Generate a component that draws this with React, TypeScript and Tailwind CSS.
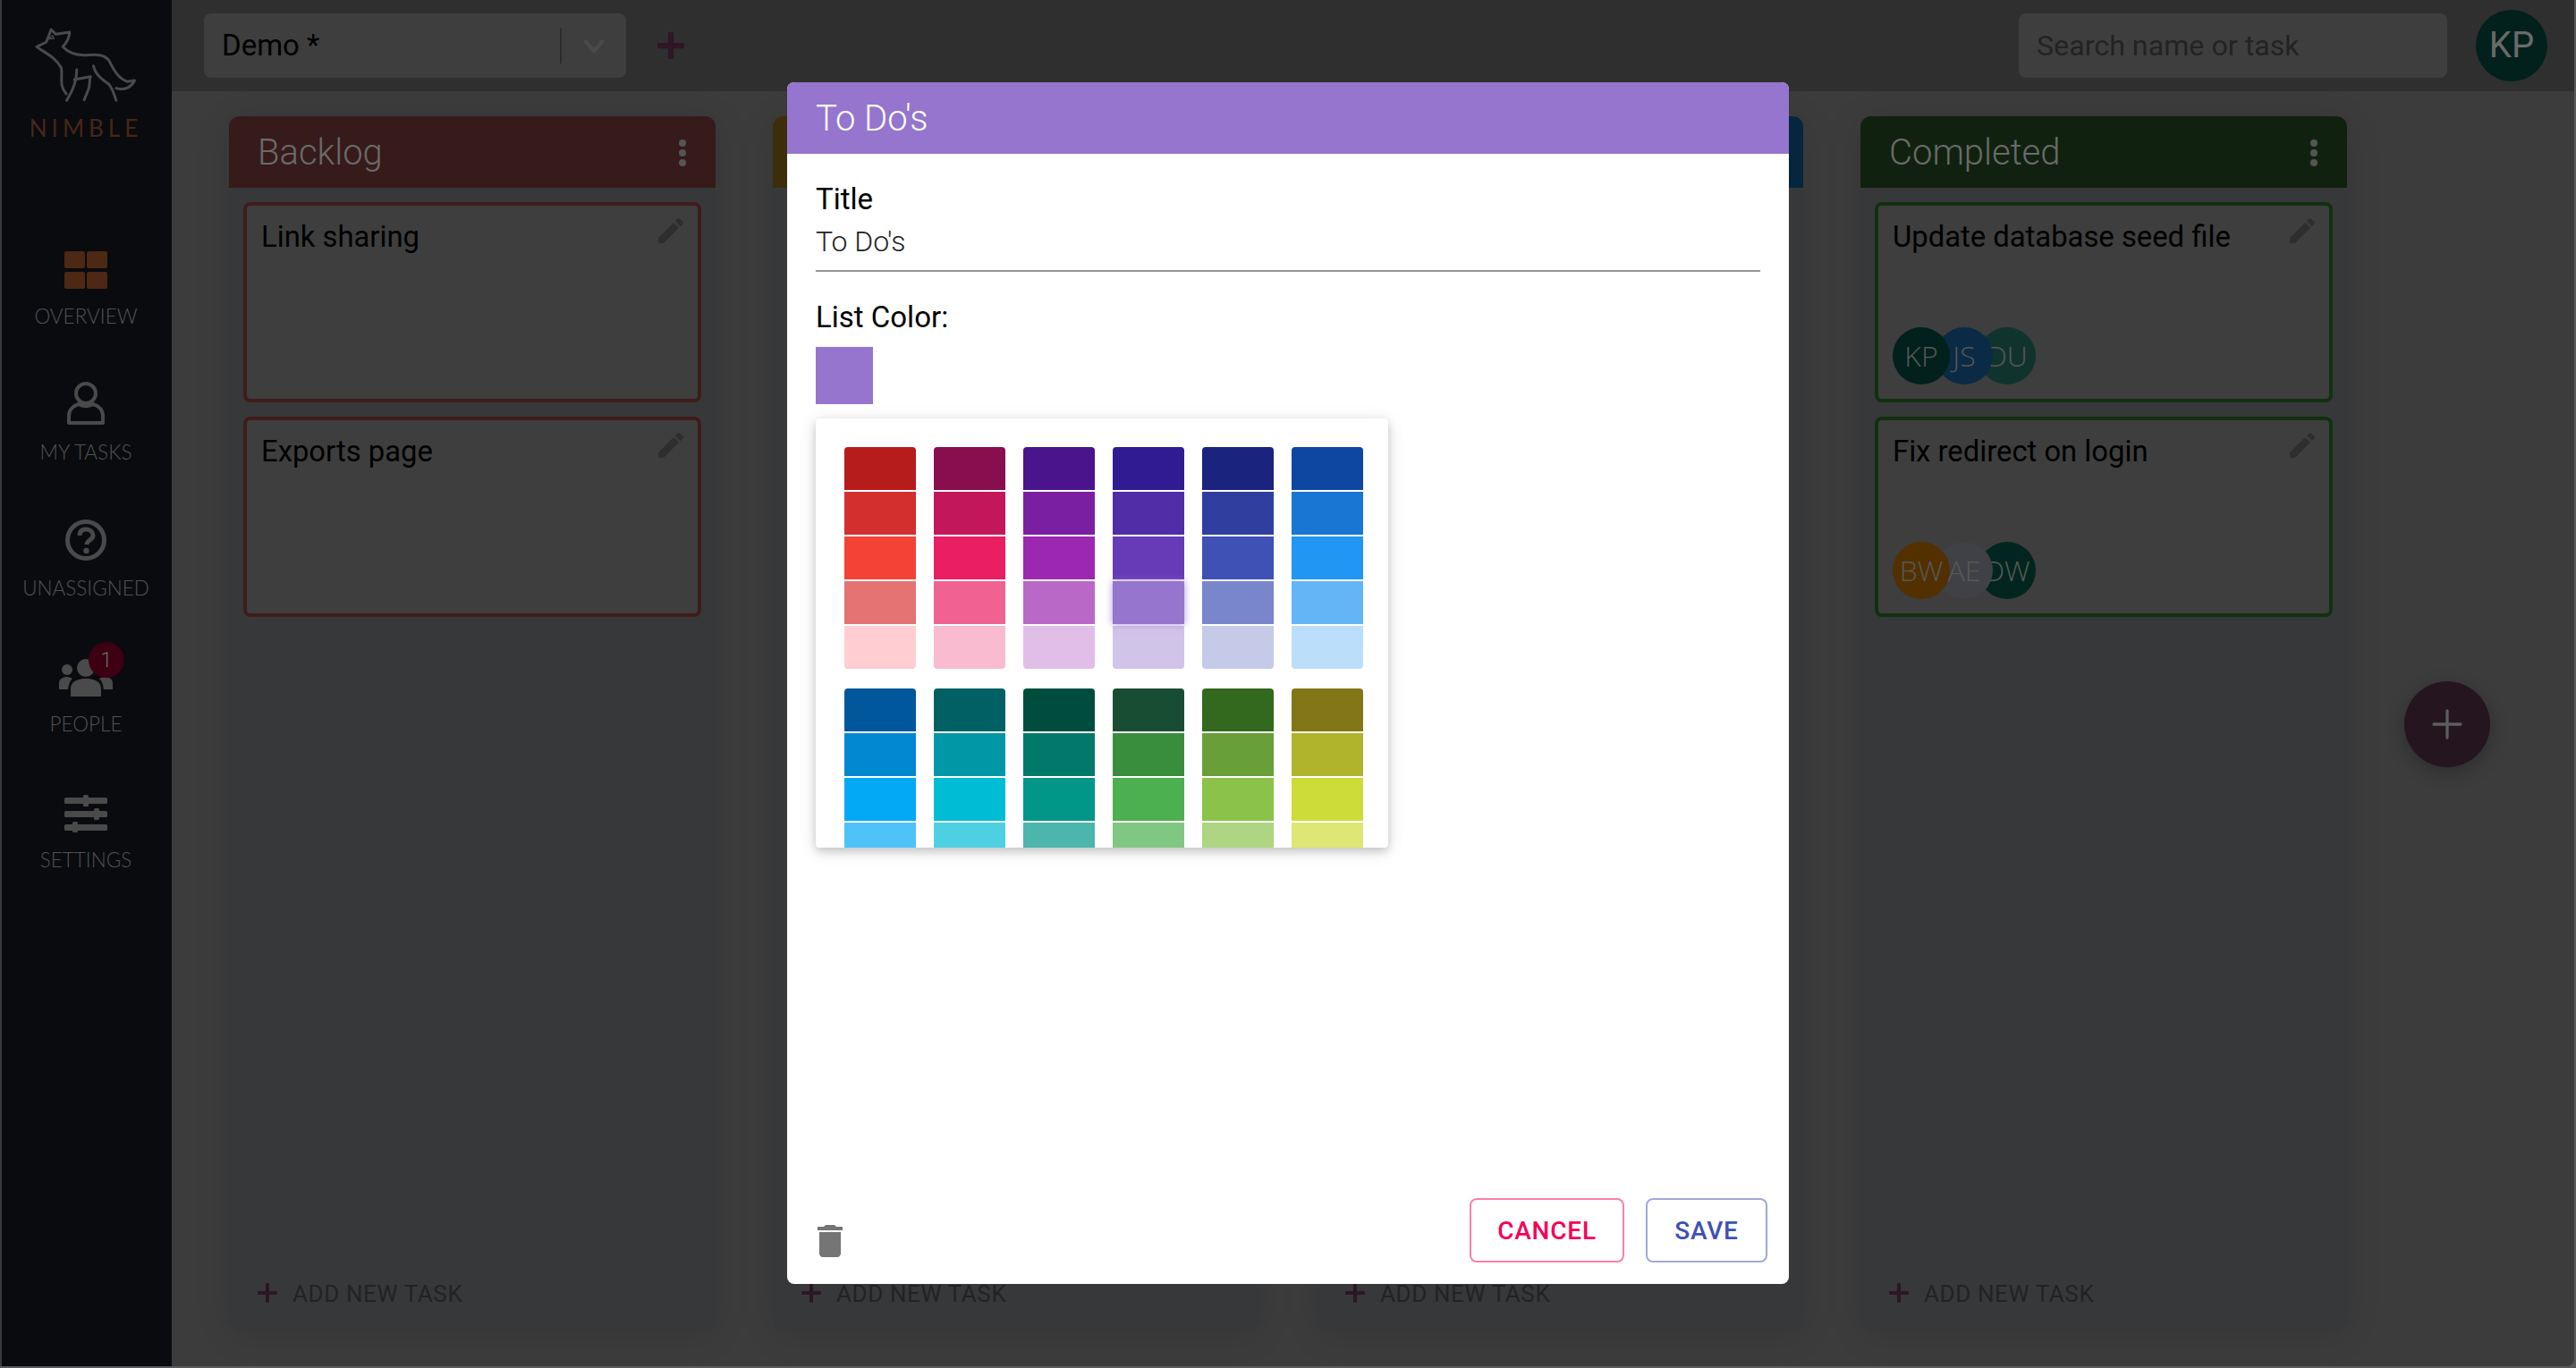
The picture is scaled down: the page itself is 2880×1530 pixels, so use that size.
import React from "react";

const ROBOTO = "font-['Roboto','Liberation_Sans',sans-serif]";

const swatchGroups: string[][] = [
  ["#b71c1c", "#d32f2f", "#f44336", "#e57373", "#ffcdd2"],
  ["#880e4f", "#c2185b", "#e91e63", "#f06292", "#f8bbd0"],
  ["#4a148c", "#7b1fa2", "#9c27b0", "#ba68c8", "#e1bee7"],
  ["#311b92", "#512da8", "#673ab7", "#9575cd", "#d1c4e9"],
  ["#1a237e", "#303f9f", "#3f51b5", "#7986cb", "#c5cae9"],
  ["#0d47a1", "#1976d2", "#2196f3", "#64b5f6", "#bbdefb"],
  ["#01579b", "#0288d1", "#03a9f4", "#4fc3f7", "#b3e5fc"],
  ["#006064", "#0097a7", "#00bcd4", "#4dd0e1", "#b2ebf2"],
  ["#004d40", "#00796b", "#009688", "#4db6ac", "#b2dfdb"],
  ["#194d33", "#388e3c", "#4caf50", "#81c784", "#c8e6c9"],
  ["#33691e", "#689f38", "#8bc34a", "#aed581", "#dcedc8"],
  ["#827717", "#afb42b", "#cddc39", "#dce775", "#f0f4c3"],
];

function Fox() {
  return (
    <svg viewBox="100 80 380 270" className="w-[127px] h-[90px]" fill="none" stroke="#4a4a4a" strokeWidth="9" strokeLinecap="round" strokeLinejoin="round">
      <path d="M124 156 L156 140 L172 98 L188 114 L234 107 C233 128 224 142 211 156 C226 172 246 184 282 184 C312 184 346 176 366 202 C384 238 398 262 428 273 L452 269 C442 290 420 304 390 295" />
      <path d="M124 156 C150 176 186 190 206 226 C212 260 196 282 223 314" />
      <path d="M258 232 C258 272 242 308 224 336" />
      <path d="M250 266 L304 256 C298 272 304 286 296 302 L283 334" />
      <path d="M314 220 C320 250 344 266 366 282 C380 300 384 318 390 336" />
      <path d="M164 130 L176 118 L182 128 Z" strokeWidth="4" />
    </svg>
  );
}

function GridIcon() {
  return (
    <svg viewBox="0 0 48 42" className="w-12 h-[42px]" fill="#4d2814">
      <rect x="0" y="0" width="23" height="19" rx="2" />
      <rect x="25" y="0" width="23" height="19" rx="2" />
      <rect x="0" y="23" width="23" height="19" rx="2" />
      <rect x="25" y="23" width="23" height="19" rx="2" />
    </svg>
  );
}

function PersonIcon() {
  return (
    <svg viewBox="0 0 42 48" className="w-[42px] h-12" fill="none" stroke="#4a4a4a" strokeWidth="4">
      <circle cx="21" cy="13" r="11" />
      <path d="M13 25 C6 27 2 32 2 38 V46 H40 V38 C40 32 36 27 29 25 C25 28 17 28 13 25 Z" strokeLinejoin="round" />
    </svg>
  );
}

function QuestionIcon() {
  return (
    <svg viewBox="0 0 46 46" className="w-[46px] h-[46px]" fill="none" stroke="#4a4a4a">
      <circle cx="23" cy="23" r="20.5" strokeWidth="5" />
      <path d="M16 18 C16 13 19 11 23 11 C28 11 31 14 31 18 C31 23 24 23 24 28" strokeWidth="5" />
      <circle cx="23.5" cy="35" r="3.2" fill="#4a4a4a" stroke="none" />
    </svg>
  );
}

function PeopleIcon() {
  return (
    <svg viewBox="0 0 60 42" className="w-[60px] h-[42px]" fill="#4a4a4a">
      <circle cx="9" cy="12" r="6" />
      <circle cx="51" cy="12" r="6" />
      <path d="M0 34 V27 C0 22 5 20 9 20 C11 20 13 21 15 22 C12 25 11 28 10 34 Z" />
      <path d="M60 34 V27 C60 22 55 20 51 20 C49 20 47 21 45 22 C48 25 49 28 50 34 Z" />
      <circle cx="30" cy="10" r="10" />
      <path d="M13 42 V33 C13 26 20 22 30 22 C40 22 47 26 47 33 V42 Z" />
    </svg>
  );
}

function SlidersIcon() {
  return (
    <svg viewBox="0 0 48 42" className="w-12 h-[42px]" fill="#4a4a4a">
      <rect x="0" y="3" width="48" height="7" rx="1.5" />
      <rect x="0" y="18" width="48" height="7" rx="1.5" />
      <rect x="0" y="33" width="48" height="7" rx="1.5" />
      <rect x="21" y="0" width="6" height="13" rx="1.5" />
      <rect x="33" y="15" width="6" height="13" rx="1.5" />
      <rect x="9" y="30" width="6" height="12" rx="1.5" />
    </svg>
  );
}

function Pencil() {
  return (
    <svg viewBox="3 3 18 18" className="w-[28px] h-[28px]" fill="#2e2e2e">
      <path d="M3 17.25V21h3.75L17.81 9.94l-3.75-3.75L3 17.25zM20.71 7.04c.39-.39.39-1.02 0-1.41l-2.34-2.34c-.39-.39-1.02-.39-1.41 0l-1.83 1.83 3.75 3.75 1.83-1.83z" />
    </svg>
  );
}

function Plus({ className, color, width }: { className: string; color: string; width: number }) {
  return (
    <svg viewBox="0 0 24 24" className={className} fill="none" stroke={color} strokeWidth={width} strokeLinecap="round">
      <path d="M12 2v20M2 12h20" />
    </svg>
  );
}

function Kebab() {
  return (
    <div className="flex flex-col gap-[3px]">
      <span className="block w-2 h-2 rounded-full bg-[#555555]" />
      <span className="block w-2 h-2 rounded-full bg-[#555555]" />
      <span className="block w-2 h-2 rounded-full bg-[#555555]" />
    </div>
  );
}

function NavItem({ label, icon, badge }: { label: string; icon: React.ReactNode; badge?: boolean }) {
  return (
    <div className="h-[152px] flex flex-col items-center">
      <div className="relative h-12 flex items-end justify-center">
        {icon}
        {badge && (
          <span className={`absolute left-[33px] top-[-13px] w-10 h-10 rounded-full bg-[#3c0012] text-[#6b6b6b] text-[24px] flex items-center justify-center ${ROBOTO} font-light`}>
            1
          </span>
        )}
      </div>
      <span className="mt-[17px] text-[22.5px] leading-[28px] text-[#525252] font-['Lato',sans-serif] font-light">{label}</span>
    </div>
  );
}

function Avatar({ initials, bg, z }: { initials: string; bg: string; z: string }) {
  return (
    <div className={`w-16 h-16 rounded-full flex items-center justify-center text-[32px] text-[#585858] font-['Open_Sans',sans-serif] font-light -mr-4 relative ${bg} ${z}`}>
      {initials}
    </div>
  );
}

function Card({ title, border, avatars }: { title: string; border: string; avatars?: { initials: string; bg: string; z: string }[] }) {
  return (
    <div className={`h-[224px] border-4 rounded-lg p-4 bg-[#3e3e3e] flex flex-col justify-between ${border}`}>
      <div className="flex items-start justify-between">
        <span className="text-[32.8px] leading-[38px] text-black">{title}</span>
        <span className="mt-[-2px]"><Pencil /></span>
      </div>
      {avatars && (
        <div className="flex">
          {avatars.map((a) => (
            <Avatar key={a.initials} {...a} />
          ))}
        </div>
      )}
    </div>
  );
}

function Column({ title, bg, children }: { title?: string; bg: string; children?: React.ReactNode }) {
  return (
    <div className="w-[544px] h-full rounded-xl bg-[#37383a] shadow-[0_4px_40px_rgba(0,0,0,0.1)] flex flex-col">
      <div className={`h-20 shrink-0 rounded-t-xl pl-8 pr-[33px] pt-[2px] flex items-center justify-between ${bg}`}>
        <span className="text-[40px] leading-none font-light text-[#6a6a6a]">{title}</span>
        <Kebab />
      </div>
      <div className="flex-1 p-4 flex flex-col gap-4">{children}</div>
      <div className="h-[53px] shrink-0 pl-8 flex items-start gap-[17px]">
        <Plus className="w-[22px] h-[22px]" color="#2c1626" width={4.4} />
        <span className="text-[26px] leading-[24px] text-[#212323] tracking-[0.6px]">ADD NEW TASK</span>
      </div>
    </div>
  );
}

function SwatchPicker() {
  return (
    <div className="w-[640px] h-[480px] bg-white rounded overflow-hidden shadow-[0_4px_20px_rgba(0,0,0,0.12),0_4px_10px_rgba(0,0,0,0.16)]">
      <div className="pt-8 pl-8 grid grid-cols-[repeat(6,80px)] gap-x-5 gap-y-[22px] w-[640px]">
        {swatchGroups.map((group, i) => (
          <div key={i} className="flex flex-col gap-[2px] w-20">
            {group.map((c, j) => (
              <div
                key={c}
                style={{ backgroundColor: c }}
                className={`h-12 w-20 ${j === 0 ? "rounded-t" : ""} ${j === 4 ? "rounded-b" : ""} ${c === "#9575cd" ? "relative z-10 shadow-[0_0_8px_rgba(149,117,205,0.8)]" : ""}`}
              />
            ))}
          </div>
        ))}
      </div>
    </div>
  );
}

export default function App() {
  return (
    <div className={`relative w-[2880px] h-[1530px] overflow-hidden bg-[#5a5a5a] pr-[2px] pb-[2px] ${ROBOTO}`}>
      <div className="w-full h-full flex">
        <aside className="w-[192px] shrink-0 bg-[#090b0f] border-l-2 border-[#3a3a3e] pr-[2px] flex flex-col items-center">
          <div className="mt-[27px]"><Fox /></div>
          <div className="mt-[13px] text-[26px] leading-[26px] tracking-[5px] text-[#482618] font-['Lato',sans-serif]">NIMBLE</div>
          <nav className="mt-[119px] flex flex-col items-center">
            <NavItem label="OVERVIEW" icon={<GridIcon />} />
            <NavItem label="MY TASKS" icon={<PersonIcon />} />
            <NavItem label="UNASSIGNED" icon={<QuestionIcon />} />
            <NavItem label="PEOPLE" icon={<PeopleIcon />} badge />
            <NavItem label="SETTINGS" icon={<SlidersIcon />} />
          </nav>
        </aside>
        <div className="flex-1 flex flex-col bg-[#3c3c3c] rounded-br-lg overflow-hidden">
          <header className="h-[102px] shrink-0 bg-[#2f2f2f] flex items-center pl-9 pr-[30px]">
            <div className="w-[472px] h-[72px] rounded-lg bg-[#3e3e3e] flex items-center pl-5 pr-0">
              <span className="flex-1 text-[33px] text-black">Demo *</span>
              <span className="w-[2px] h-10 bg-[#2c2c2c]" />
              <svg viewBox="0 0 24 24" className="w-[36px] h-[36px] mx-[18px]" fill="none" stroke="#4a4a4a" strokeWidth="3">
                <path d="M5 8l7 8 7-8" />
              </svg>
            </div>
            <Plus className="w-[30px] h-[30px] ml-[35px]" color="#2e1626" width={5} />
            <div className="flex-1" />
            <div className="w-[479px] h-[72px] rounded-lg bg-[#3e3e3e] flex items-center pl-5">
              <span className="text-[32.2px] text-[#232323]">Search name or task</span>
            </div>
            <div className="ml-8 w-20 h-20 rounded-full bg-[#02201c] flex items-center justify-center text-[40px] text-[#6a6a6a]">KP</div>
          </header>
          <main className="relative flex-1 pt-7 pl-16 pb-10 flex gap-16">
            <Column title="Backlog" bg="bg-[#371a1a]">
              <Card title="Link sharing" border="border-[#3f1c1c]" />
              <Card title="Exports page" border="border-[#3f1c1c]" />
            </Column>
            <Column bg="bg-[#3d2e0b]" />
            <Column bg="bg-[#05263c]" />
            <Column title="Completed" bg="bg-[#10220f]">
              <Card
                title="Update database seed file"
                border="border-[#12300f]"
                avatars={[
                  { initials: "KP", bg: "bg-[#02201c]", z: "z-30" },
                  { initials: "JS", bg: "bg-[#0a2a46]", z: "z-20" },
                  { initials: "DU", bg: "bg-[#11332d]", z: "z-10" },
                ]}
              />
              <Card
                title="Fix redirect on login"
                border="border-[#12300f]"
                avatars={[
                  { initials: "BW", bg: "bg-[#523000]", z: "z-30" },
                  { initials: "AE", bg: "bg-[#404146]", z: "z-20" },
                  { initials: "DW", bg: "bg-[#02261f]", z: "z-10" },
                ]}
              />
            </Column>
            <div className="absolute left-[2496px] top-[660px] w-24 h-24 rounded-full bg-[#24151f] shadow-[0_6px_20px_rgba(0,0,0,0.25)] flex items-center justify-center">
              <Plus className="w-[36px] h-[36px]" color="#5e5e5e" width={2.2} />
            </div>
          </main>
        </div>
      </div>

      <div className="absolute inset-0 flex items-center justify-center pb-[2px]">
        <div className="w-[1120px] h-[1344px] bg-white rounded-lg overflow-hidden flex flex-col">
          <div className="h-20 shrink-0 bg-[#9575cd] px-8 pt-[2px] flex items-center text-[40px] text-white font-light">To Do's</div>
          <div className="flex-1 px-8 pt-[33px] flex flex-col">
            <label className="text-[33px] leading-9 font-[450] text-black">Title</label>
            <div className="mt-[11px] h-[52px] border-b-2 border-[#949494] text-[32px] leading-9 text-[#222222] font-light">To Do's</div>
            <label className="mt-[33px] text-[33px] leading-9 font-[450] text-black">List Color:</label>
            <div className="mt-[15px] w-16 h-16 bg-[#9575cd]" />
            <div className="mt-4"><SwatchPicker /></div>
            <div className="flex-1" />
            <div className="flex items-end justify-between -mr-2 pb-6">
              <svg viewBox="0 0 24 24" className="w-12 h-12 -ml-2" fill="#757575">
                <path d="M6 19c0 1.1.9 2 2 2h8c1.1 0 2-.9 2-2V7H6v12zM19 4h-3.5l-1-1h-5l-1 1H5v2h14V4z" />
              </svg>
              <div className="flex gap-6">
                <button className="h-[72px] w-[173px] pt-[2px] rounded-lg border-2 border-[#fa80ab] text-[#f50057] text-[28px] font-medium tracking-[0.8px]">CANCEL</button>
                <button className="h-[72px] w-[136px] pt-[2px] rounded-lg border-2 border-[#9fa8da] text-[#3f51b5] text-[28px] font-medium tracking-[0.8px]">SAVE</button>
              </div>
            </div>
          </div>
        </div>
      </div>
    </div>
  );
}
